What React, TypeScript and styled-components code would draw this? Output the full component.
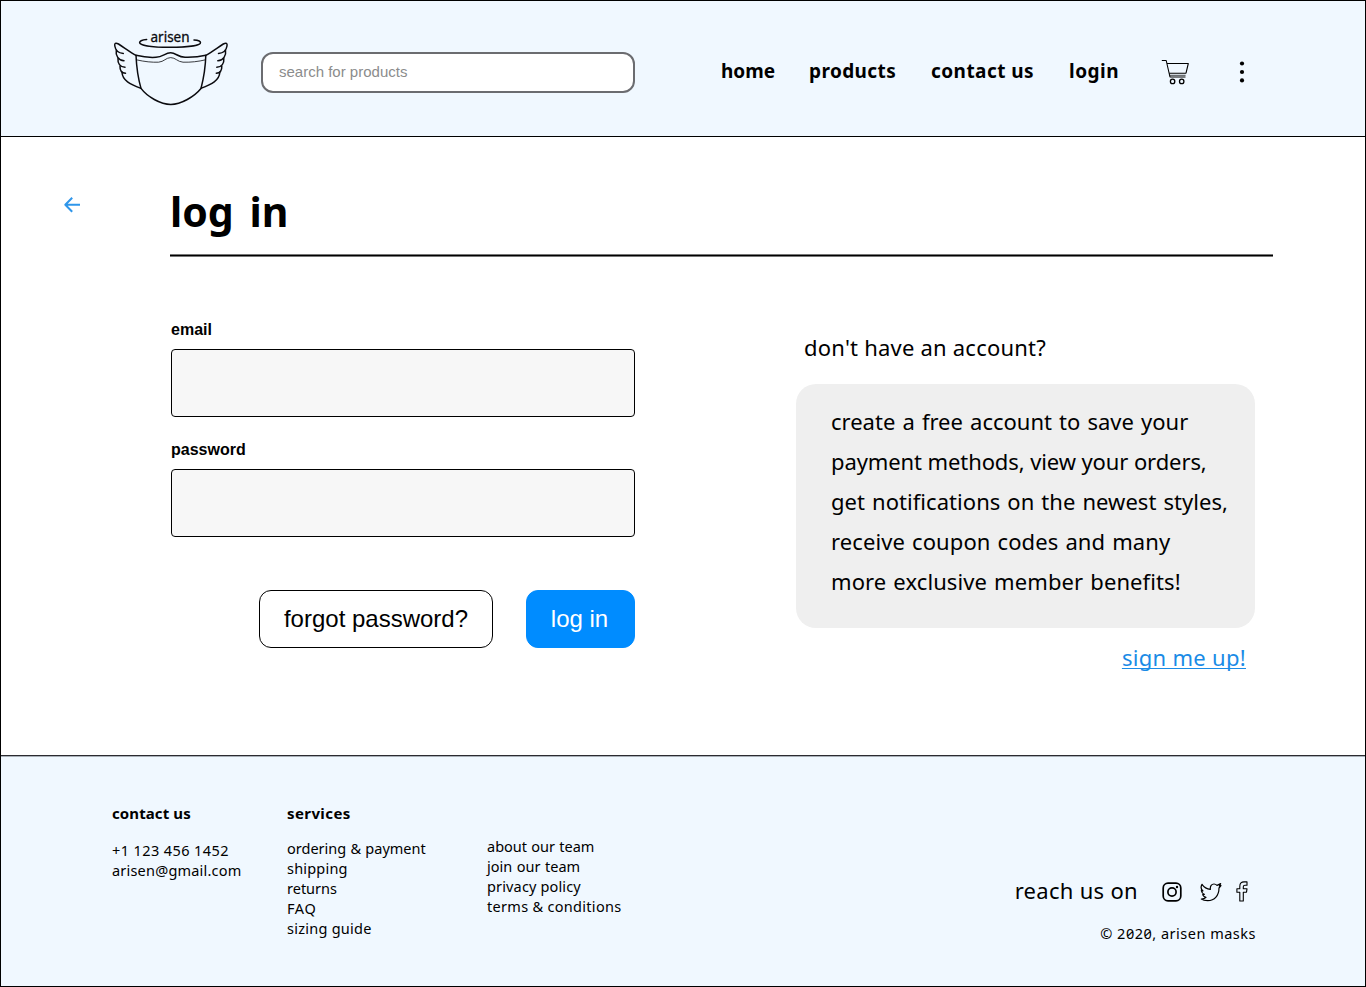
import React from "react";
import styled, { createGlobalStyle } from "styled-components";

const sans = `"Noto Sans", "Open Sans", sans-serif`;
const arial = `"Liberation Sans", Arial, sans-serif`;

const GlobalStyle = createGlobalStyle`
  *, *::before, *::after { box-sizing: border-box; }
  body { margin: 0; background: #fff; color: #000; font-family: ${sans}; }
  h1, h2, p, ul { margin: 0; padding: 0; }
  ul { list-style: none; }
  a { color: inherit; text-decoration: none; }
  svg { display: block; flex: none; }
`;

const Page = styled.div`
  display: flex;
  flex-direction: column;
  width: 1366px;
  height: 987px;
  border: 1px solid #000;
  overflow: hidden;
`;

const Header = styled.header`
  display: flex;
  align-items: flex-start;
  height: 136px;
  flex: none;
  padding: 23px 0 0 112px;
  background: #f0f8ff;
  border-bottom: 1px solid #000;
`;

const Search = styled.input`
  width: 374px;
  height: 41px;
  margin: 28px 0 0 32px;
  padding: 0 16px 2px;
  border: 2px solid #6b6c70;
  border-radius: 12px;
  background: #fff;
  font: 15px ${arial};
  outline: none;
  &::placeholder { color: #8b8c8c; opacity: 1; }
`;

const Nav = styled.nav`
  display: flex;
  align-items: center;
  height: 30px;
  margin: 32px 0 0 86px;
`;

const NavLink = styled.a<{ $width: number; $track?: number }>`
  width: ${(p) => p.$width}px;
  font-weight: 700;
  font-size: 19px;
  line-height: 30px;
  letter-spacing: ${(p) => p.$track ?? 0}px;
  white-space: nowrap;
`;

const IconButton = styled.button<{ $gap: number; $drop?: number }>`
  margin: ${(p) => p.$drop ?? 0}px 0 0 ${(p) => p.$gap}px;
  padding: 0;
  border: 0;
  background: none;
`;

const Main = styled.main`
  display: flex;
  align-items: flex-start;
  height: 618px;
  flex: none;
  padding-left: 62px;
`;

const BackLink = styled.a`
  margin-top: 59px;
`;

const Content = styled.div`
  flex: none;
  width: 1103px;
  margin: 50px 0 0 89px;
`;

const Title = styled.h1`
  height: 67px;
  font-weight: 700;
  font-size: 41px;
  line-height: 48px;
  word-spacing: 5px;
`;

const Rule = styled.div`
  height: 3px;
  background: linear-gradient(#777 0 1px, #000 1px 2px, #777 2px 3px);
`;

const Columns = styled.div`
  display: flex;
  align-items: flex-start;
`;

const Form = styled.form`
  display: flex;
  flex-direction: column;
  width: 464px;
  margin-left: 1px;
  padding-top: 62px;
`;

const Field = styled.label`
  display: flex;
  flex-direction: column;
  height: 120px;
  font: 700 16px/22px ${arial};
`;

const FieldInput = styled.input`
  height: 68px;
  margin-top: 8px;
  padding: 0 16px;
  border: 1px solid #000;
  border-radius: 4px;
  background: #f7f7f7;
  font: 20px ${arial};
  outline: none;
`;

const Actions = styled.div`
  display: flex;
  justify-content: flex-end;
  gap: 33px;
  padding-top: 31px;
`;

const Button = styled.button<{ $primary?: boolean }>`
  width: ${(p) => (p.$primary ? 109 : 234)}px;
  height: 58px;
  padding: 0 ${(p) => (p.$primary ? 2 : 0)}px 0 0;
  border: 1px solid ${(p) => (p.$primary ? "#008cff" : "#000")};
  border-radius: 12px;
  background: ${(p) => (p.$primary ? "#008cff" : "#fff")};
  color: ${(p) => (p.$primary ? "#fff" : "#000")};
  font: 24px ${arial};
`;

const Aside = styled.aside`
  display: flex;
  flex-direction: column;
  width: 459px;
  margin-left: 161px;
  padding-top: 70px;
  font-size: 22px;
  line-height: 40px;
`;

const Question = styled.p`
  height: 57px;
  padding-left: 8px;
  letter-spacing: 0.22px;
`;

const Card = styled.div`
  height: 244px;
  padding: 17px 0 0 35px;
  border-radius: 20px;
  background: #efefef;
`;

const Line = styled.p<{ $track?: number; $word?: number }>`
  letter-spacing: ${(p) => p.$track ?? 0}px;
  word-spacing: ${(p) => p.$word ?? 0}px;
  white-space: nowrap;
`;

const SignUp = styled.a`
  align-self: flex-end;
  margin: 9px 9px 0 0;
  color: #1a8be6;
  letter-spacing: 0.3px;
  text-decoration: underline;
  text-decoration-thickness: 1px;
  text-underline-offset: 2px;
  text-decoration-skip-ink: none;
`;

const Footer = styled.footer`
  display: flex;
  align-items: flex-start;
  flex: 1;
  padding: 0 109px 0 111px;
  background: linear-gradient(#2b2b30 0 1px, #a9b0b8 1px 2px, #f0f8ff 2px);
  font-size: 14.5px;
  line-height: 20px;
`;

const FooterColumn = styled.section<{ $width: number; $top: number }>`
  flex: none;
  width: ${(p) => p.$width}px;
  padding-top: ${(p) => p.$top}px;
`;

const FooterList = styled.ul<{ $top: number }>`
  flex: none;
  padding-top: ${(p) => p.$top}px;
`;

const FooterTitle = styled.h2<{ $gap: number; $track?: number }>`
  margin-bottom: ${(p) => p.$gap}px;
  font-size: 15px;
  line-height: 20px;
  letter-spacing: ${(p) => p.$track ?? 0}px;
`;

const FooterEnd = styled.div`
  display: flex;
  flex-direction: column;
  align-items: flex-end;
  margin-left: auto;
  padding-top: 120px;
`;

const Social = styled.div`
  display: flex;
  align-items: center;
  height: 32px;
  padding-right: 8px;
`;

const SocialLabel = styled.span`
  margin: -2px 24px 0 0;
  font-size: 22px;
  line-height: 32px;
  letter-spacing: 0.3px;
`;

const Copyright = styled.p`
  margin-top: 16px;
  letter-spacing: 0.5px;
  font-feature-settings: "zero";
`;

const WingHalf = () => (
  <>
    <path d="M136 55.3 C131 52.5 124 47.5 118.5 44 C115.5 42.4 114.3 43.3 114.8 46 C115.5 50.5 118.5 53 123.3 53.4" />
    <path d="M116.3 50 C115.3 55.5 118.5 60.5 124 60.7" />
    <path d="M118 58.5 C117.5 63.5 120 67 125 67.3" />
    <path d="M120 66 C119.8 70.5 121.5 73 125.5 73.3" />
    <path d="M122 72.5 C122.5 80.5 130 84 141 88.4" />
  </>
);

const Logo = () => (
  <svg width="116" height="82" viewBox="113 24 116 82" fill="none" stroke="#0b0b0f" strokeWidth="1.5" strokeLinecap="round" strokeLinejoin="round">
    <path d="M146.7 39.4 C142 39.8 139.6 41 139.6 42.7 C140 45.7 154 47.3 170 47.3 C187 47.3 200.5 45.5 200.5 42.7 C200.5 41 198 40.2 194 40" />
    <text x="150.5" y="42.2" fill="#0b0b0f" stroke="#0b0b0f" strokeWidth="0.3" fontFamily={sans} fontSize="13.5">arisen</text>
    <WingHalf />
    <g transform="translate(341.8 0) scale(-1 1)">
      <WingHalf />
    </g>
    <path d="M136 55.3 C143 57 150 57.7 156 57.3 C163 57 165 52.8 170.6 52.8 C176 52.8 177.5 57 185 57.3 C192 57.5 199 57 205.8 55.3 C205.5 67 203.7 78 201 88.5 C194.5 96.5 181 104.5 170.8 104.5 C160.5 104.5 147 96.5 141 88.4 C138 78 136.5 67 136 55.3 Z" />
    <path d="M136.3 59.8 C145 61.8 152 62.4 158.5 62.2 C164 61.8 166 57.6 170.7 57.6 C175.5 57.6 177.5 61.8 183 62.2 C191 62.4 198 61.6 205.6 59.8" strokeWidth="0.8" />
  </svg>
);

const CartIcon = () => (
  <svg width="30" height="28" viewBox="1160 58 30 28" fill="none" stroke="#000" strokeWidth="1.1" strokeLinejoin="round">
    <path d="M1161.8 60.5 H1166.2 L1170 77 H1185.5" />
    <path d="M1167 63.5 H1188.3 L1186 73.2 H1169.2" />
    <path d="M1169.6 75.3 H1185.6" strokeWidth="0.7" />
    <circle cx="1172.6" cy="81.4" r="2.2" strokeWidth="1.3" />
    <circle cx="1181.7" cy="81.4" r="2.2" strokeWidth="1.3" />
  </svg>
);

const MoreIcon = () => (
  <svg width="6" height="22" viewBox="0 0 6 22">
    <circle cx="3" cy="2.5" r="2.1" />
    <circle cx="3" cy="11" r="2.1" />
    <circle cx="3" cy="19.4" r="2.1" />
  </svg>
);

const BackIcon = () => (
  <svg width="18" height="18" viewBox="0 0 18 18" fill="none" stroke="#2f96ea" strokeWidth="2" strokeLinejoin="round">
    <path d="M17 8.8 H2.5 M9.2 1.8 L2.3 8.8 L9.2 15.8" />
  </svg>
);

const InstagramIcon = () => (
  <svg width="20" height="20" viewBox="0 0 20 20" fill="none" stroke="#000" strokeWidth="1.7">
    <rect x="1.2" y="1.2" width="17.6" height="17.6" rx="4.8" />
    <circle cx="10" cy="10" r="4.1" />
    <circle cx="15" cy="5" r="1.2" fill="#000" stroke="none" />
  </svg>
);

const TwitterIcon = () => (
  <svg width="22" height="20" viewBox="149 38 66 60" fill="none" stroke="#000" strokeWidth="3.6" strokeLinejoin="round">
    <path d="M155 45 C162 55 170 59 180 60 C179 50 184 44 191 44 C195 44 198 46 200 48 L211 43 L207 50 L212 49 L206 56 C206 78 193 94 172 94 C164 94 157 92 153 89 C159 89 164 87 167 84 C162 83 159 80 157 76 L162 75 C156 73 154 69 153 64 L158 65 C152 60 151 52 155 45 Z" />
  </svg>
);

const FacebookIcon = () => (
  <svg width="12" height="21" viewBox="0 0 12 21" fill="none" stroke="#000" strokeWidth="1.1" strokeLinejoin="round">
    <path d="M3.8 20 V11.2 H0.9 V7.8 H3.8 V5.2 C3.8 2.3 5.5 0.9 8 0.9 H11 V4.2 H9 C7.7 4.2 7.3 4.8 7.3 5.8 V7.8 H11 L10.5 11.2 H7.3 V20 Z" />
  </svg>
);

export default function App() {
  return (
    <>
      <GlobalStyle />
      <Page>
        <Header>
          <Logo />
          <Search placeholder="search for products" />
          <Nav>
            <NavLink href="#" $width={88}>home</NavLink>
            <NavLink href="#" $width={122} $track={0.4}>products</NavLink>
            <NavLink href="#" $width={138} $track={0.45}>contact us</NavLink>
            <NavLink href="#" $width={50} $track={0.5}>login</NavLink>
            <IconButton $gap={41} $drop={2} aria-label="cart"><CartIcon /></IconButton>
            <IconButton $gap={49} $drop={1} aria-label="more"><MoreIcon /></IconButton>
          </Nav>
        </Header>

        <Main>
          <BackLink href="#" aria-label="back"><BackIcon /></BackLink>
          <Content>
            <Title>log in</Title>
            <Rule />
            <Columns>
              <Form>
                <Field>email<FieldInput type="email" /></Field>
                <Field>password<FieldInput type="password" /></Field>
                <Actions>
                  <Button type="button">forgot password?</Button>
                  <Button type="button" $primary>log in</Button>
                </Actions>
              </Form>
              <Aside>
                <Question>don't have an account?</Question>
                <Card>
                  <Line $word={1.4}>create a free account to save your</Line>
                  <Line $track={-0.1}>payment methods, view your orders,</Line>
                  <Line $track={0.05} $word={1.2}>get notifications on the newest styles,</Line>
                  <Line $track={0.1} $word={1.2}>receive coupon codes and many</Line>
                  <Line $track={0.1} $word={1.2}>more exclusive member benefits!</Line>
                </Card>
                <SignUp href="#">sign me up!</SignUp>
              </Aside>
            </Columns>
          </Content>
        </Main>

        <Footer>
          <FooterColumn $width={175} $top={48}>
            <FooterTitle $gap={17} $track={0.1}>contact us</FooterTitle>
            <Line $track={0.4}>+1 123 456 1452</Line>
            <Line $track={0.2}>arisen@gmail.com</Line>
          </FooterColumn>
          <FooterColumn $width={200} $top={48}>
            <FooterTitle $gap={15} $track={0.4}>services</FooterTitle>
            <ul>
              <Line as="li" $word={0.5}>ordering &amp; payment</Line>
              <Line as="li" $track={0.2}>shipping</Line>
              <Line as="li">returns</Line>
              <Line as="li" $track={0.6}>FAQ</Line>
              <Line as="li" $track={0.25}>sizing guide</Line>
            </ul>
          </FooterColumn>
          <FooterList $top={81}>
            <Line as="li" $word={0.5}>about our team</Line>
            <Line as="li" $word={0.8}>join our team</Line>
            <Line as="li" $track={0.15}>privacy policy</Line>
            <Line as="li" $track={0.3}>terms &amp; conditions</Line>
          </FooterList>
          <FooterEnd>
            <Social>
              <SocialLabel>reach us on</SocialLabel>
              <IconButton $gap={0} $drop={2} aria-label="instagram"><InstagramIcon /></IconButton>
              <IconButton $gap={18} $drop={2} aria-label="twitter"><TwitterIcon /></IconButton>
              <IconButton $gap={14} $drop={1} aria-label="facebook"><FacebookIcon /></IconButton>
            </Social>
            <Copyright>© 2020, arisen masks</Copyright>
          </FooterEnd>
        </Footer>
      </Page>
    </>
  );
}
